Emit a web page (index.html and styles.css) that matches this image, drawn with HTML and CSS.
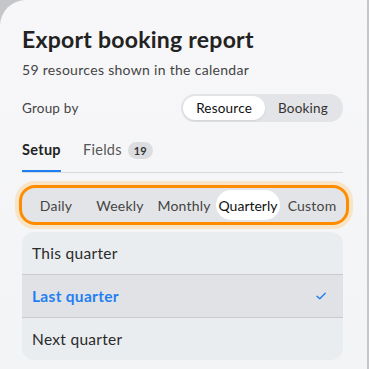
FILE: index.html
```html
<!DOCTYPE html>
<html>
<head>
    <title>Export booking report</title>
    <meta charset="UTF-8">
    <link rel="stylesheet" href="styles.css">
</head>
<body>
    <div class="panel">
        <h1>Export booking report</h1>
        <p class="subtitle">59 resources shown in the calendar</p>

        <div class="group-row">
            <span class="group-label">Group by</span>
            <div class="toggle">
                <span class="toggle-item active">Resource</span>
                <span class="toggle-item">Booking</span>
            </div>
        </div>

        <div class="tabs">
            <span class="tab active">Setup</span>
            <span class="tab">Fields <span class="badge">19</span></span>
        </div>

        <div class="period-ring">
            <div class="period">
                <span class="period-item">Daily</span>
                <span class="period-item">Weekly</span>
                <span class="period-item">Monthly</span>
                <span class="period-item active">Quarterly</span>
                <span class="period-item">Custom</span>
            </div>
        </div>

        <ul class="options">
            <li>This quarter</li>
            <li class="selected">Last quarter
                <svg width="12" height="10" viewBox="0 0 12 10"><path d="M2 5.3 L4.8 7.8 L10.2 2.2" fill="none" stroke="#1f7ff2" stroke-width="1.4" stroke-linecap="round" stroke-linejoin="round"/></svg>
            </li>
            <li>Next quarter</li>
        </ul>
    </div>
</body>
</html>
```

FILE: styles.css
```css
html, body {
    margin: 0;
    padding: 0;
}
body {
    background: #c4c6ca;
    font-family: Lato, "Noto Sans", sans-serif;
    color: #222;
    width: 369px;
    height: 369px;
    overflow: hidden;
}
.panel {
    width: 367px;
    height: 369px;
    box-sizing: border-box;
    background: linear-gradient(180deg, #f7f7f9 0%, #f3f4f6 100%);
    border-top-left-radius: 26px;
    padding: 25px 24px 0 22px;
}
h1 {
    margin: 0;
    font-size: 23px;
    font-weight: 700;
    color: #222;
    line-height: 28px;
    letter-spacing: 0.25px;
}
.subtitle {
    margin: 8px 0 0;
    font-size: 14px;
    color: #444;
    line-height: 18px;
    letter-spacing: 0.3px;
}
.group-row {
    display: flex;
    align-items: center;
    justify-content: space-between;
    margin-top: 15px;
}
.group-label {
    font-size: 13.5px;
    color: #444;
    letter-spacing: 0.2px;
}
.toggle {
    display: flex;
    background: #e3e4e7;
    border-radius: 14px;
    padding: 2px;
}
.toggle-item {
    font-size: 13.5px;
    color: #333;
    padding: 3px 13px;
    line-height: 18px;
    border-radius: 12px;
    letter-spacing: 0.2px;
}
.toggle-item.active {
    background: #fff;
    color: #111;
    box-shadow: 0 1px 2px rgba(0,0,0,0.08);
}
.tabs {
    display: flex;
    gap: 22px;
    margin-top: 15px;
    border-bottom: 1px solid #d6d8dc;
}
.tab {
    font-size: 14.5px;
    color: #555;
    padding: 4px 0 13px;
    line-height: 18px;
    display: flex;
    align-items: center;
    gap: 6px;
    letter-spacing: 0.3px;
}
.tab.active {
    color: #222;
    font-weight: 700;
    box-shadow: inset 0 -2px 0 #1f7ff2;
}
.badge {
    background: #dcdde0;
    color: #333;
    font-size: 11px;
    font-weight: 700;
    padding: 1px 6px;
    border-radius: 9px;
    line-height: 15px;
    letter-spacing: 0;
}
.period-ring {
    margin: 8px -10px 0 -7px;
    border: 4px solid #f8e5c8;
    border-radius: 20px;
}
.period {
    display: grid;
    grid-template-columns: repeat(5, 1fr);
    background: #e3e4e7;
    border: 3px solid #ff8c00;
    border-radius: 16px;
    padding: 2px;
}
.period-item {
    font-size: 14px;
    color: #444;
    height: 30px;
    display: flex;
    align-items: center;
    justify-content: center;
    border-radius: 15px;
    letter-spacing: 0.2px;
}
.period-item.active {
    background: #fff;
    color: #111;
    letter-spacing: 0;
}
.options {
    list-style: none;
    margin: 3px 0 0;
    padding: 0;
    background: #eaedf0;
    border-radius: 12px;
    overflow: hidden;
}
.options li {
    font-size: 15.5px;
    color: #2a2a2a;
    padding: 0 16px 0 10px;
    height: 42px;
    display: flex;
    align-items: center;
    justify-content: space-between;
    letter-spacing: 0.3px;
}
.options li + li {
    border-top: 1px solid #c9cbcf;
}
.options li.selected {
    background: #e1e2e6;
    color: #1f7ff2;
    font-weight: 700;
}
```
